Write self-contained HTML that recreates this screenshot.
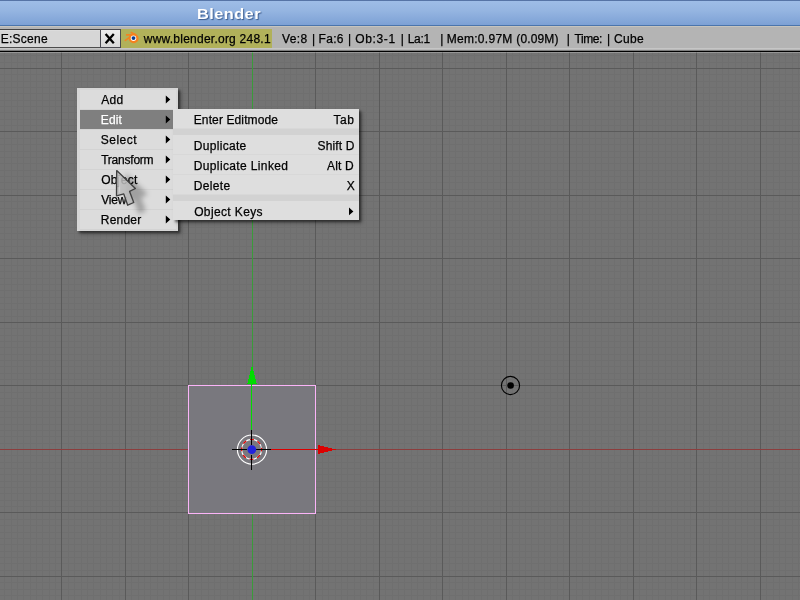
<!DOCTYPE html>
<html><head><meta charset="utf-8"><title>Blender</title>
<style>
html,body{margin:0;padding:0;}
body{width:800px;height:600px;overflow:hidden;background:#737373;position:relative;font-family:"Liberation Sans",sans-serif;font-size:12px;color:#000;}
#title{position:absolute;left:0;top:0;width:800px;height:26px;background:linear-gradient(#9ebde7 0%,#95b5e1 40%,#7da1d5 100%);border-top:1px solid #5674a6;border-bottom:1px solid #4b75ac;box-sizing:border-box;}
#hdr{position:absolute;left:0;top:26px;width:800px;height:26px;background:linear-gradient(#b4b4b4 0px,#b4b4b4 21px,#c6c6c6 21px,#c6c6c6 22px,#b8b8b8 22px,#b8b8b8 23px,#7c7c7c 23px,#7c7c7c 24px,#000 24px,#000 25px);box-sizing:border-box;border-top:1px solid #c6c4be;}
#fld{position:absolute;left:-3px;top:2px;width:104px;height:19px;background:#d6d6d6;border:1px solid #5a5a5a;border-top-color:#464646;border-bottom-color:#4c4c4c;box-shadow:inset 0 1px 0 #dcdcdc;box-sizing:border-box;}
#xb{position:absolute;left:100px;top:2px;width:21px;height:19px;background:linear-gradient(#ededed,#d8d8d8);border:1px solid #4a4a52;box-sizing:border-box;}
#url{position:absolute;left:121px;top:2px;width:151px;height:19px;background:#b1b15a;}
svg{position:absolute;left:0;top:0;}
.t{position:absolute;font-size:12px;line-height:15px;white-space:pre;-webkit-text-stroke:0.25px currentColor;}
.t.big{font-size:15px;line-height:17px;font-weight:bold;color:#fff;text-shadow:1px 1px 1px #3a5a8c;-webkit-text-stroke:0;transform:scaleX(1.09);transform-origin:0 0;}
.menu{position:absolute;background:#d6d6d6;box-shadow:2px 2px 2px rgba(0,0,0,0.42),3px 3px 4px rgba(0,0,0,0.3);}
#m1{left:77px;top:88px;width:101px;height:143px;}
#m2{left:173px;top:109px;width:186px;height:111px;background:#d2d2d2;overflow:hidden;}
.r{position:absolute;left:3px;right:2px;height:19px;background:#dcdcdc;border-bottom:1px solid #d3d3d3;}
#m2 .r{left:0;right:0;background:#dedede;border-bottom-color:#d8d8d8;}
.r.hl{background:#7f7f7f;border-bottom-color:#d4d4d4;}
#ov,#ov2{position:absolute;left:0;top:0;width:800px;height:600px;will-change:transform;}
</style></head><body>
<svg width="800" height="600" viewBox="0 0 800 600" shape-rendering="crispEdges">
<rect x="0" y="52" width="800" height="548" fill="#737373"/>
<path d="M4.5 52V600M11.5 52V600M17.5 52V600M23.5 52V600M30.5 52V600M36.5 52V600M42.5 52V600M49.5 52V600M55.5 52V600M68.5 52V600M74.5 52V600M81.5 52V600M87.5 52V600M93.5 52V600M100.5 52V600M106.5 52V600M112.5 52V600M119.5 52V600M131.5 52V600M138.5 52V600M144.5 52V600M150.5 52V600M157.5 52V600M163.5 52V600M169.5 52V600M176.5 52V600M182.5 52V600M195.5 52V600M201.5 52V600M208.5 52V600M214.5 52V600M220.5 52V600M227.5 52V600M233.5 52V600M239.5 52V600M246.5 52V600M258.5 52V600M265.5 52V600M271.5 52V600M277.5 52V600M284.5 52V600M290.5 52V600M296.5 52V600M303.5 52V600M309.5 52V600M322.5 52V600M328.5 52V600M335.5 52V600M341.5 52V600M347.5 52V600M354.5 52V600M360.5 52V600M366.5 52V600M373.5 52V600M385.5 52V600M392.5 52V600M398.5 52V600M404.5 52V600M411.5 52V600M417.5 52V600M423.5 52V600M430.5 52V600M436.5 52V600M449.5 52V600M455.5 52V600M462.5 52V600M468.5 52V600M474.5 52V600M481.5 52V600M487.5 52V600M493.5 52V600M500.5 52V600M512.5 52V600M519.5 52V600M525.5 52V600M531.5 52V600M538.5 52V600M544.5 52V600M550.5 52V600M557.5 52V600M563.5 52V600M576.5 52V600M582.5 52V600M589.5 52V600M595.5 52V600M601.5 52V600M608.5 52V600M614.5 52V600M620.5 52V600M627.5 52V600M639.5 52V600M646.5 52V600M652.5 52V600M658.5 52V600M665.5 52V600M671.5 52V600M677.5 52V600M684.5 52V600M690.5 52V600M703.5 52V600M709.5 52V600M716.5 52V600M722.5 52V600M728.5 52V600M735.5 52V600M741.5 52V600M747.5 52V600M754.5 52V600M766.5 52V600M773.5 52V600M779.5 52V600M785.5 52V600M792.5 52V600M798.5 52V600M0 55.5H800M0 62.5H800M0 74.5H800M0 81.5H800M0 87.5H800M0 93.5H800M0 100.5H800M0 106.5H800M0 112.5H800M0 119.5H800M0 125.5H800M0 138.5H800M0 144.5H800M0 151.5H800M0 157.5H800M0 163.5H800M0 170.5H800M0 176.5H800M0 182.5H800M0 189.5H800M0 201.5H800M0 208.5H800M0 214.5H800M0 220.5H800M0 227.5H800M0 233.5H800M0 239.5H800M0 246.5H800M0 252.5H800M0 265.5H800M0 271.5H800M0 278.5H800M0 284.5H800M0 290.5H800M0 297.5H800M0 303.5H800M0 309.5H800M0 316.5H800M0 328.5H800M0 335.5H800M0 341.5H800M0 347.5H800M0 354.5H800M0 360.5H800M0 366.5H800M0 373.5H800M0 379.5H800M0 392.5H800M0 398.5H800M0 405.5H800M0 411.5H800M0 417.5H800M0 424.5H800M0 430.5H800M0 436.5H800M0 443.5H800M0 455.5H800M0 462.5H800M0 468.5H800M0 474.5H800M0 481.5H800M0 487.5H800M0 493.5H800M0 500.5H800M0 506.5H800M0 519.5H800M0 525.5H800M0 532.5H800M0 538.5H800M0 544.5H800M0 551.5H800M0 557.5H800M0 563.5H800M0 570.5H800M0 582.5H800M0 589.5H800M0 595.5H800" stroke="#6f6f6f" fill="none"/>
<path d="M61.5 52V600M125.5 52V600M188.5 52V600M315.5 52V600M379.5 52V600M442.5 52V600M506.5 52V600M569.5 52V600M633.5 52V600M696.5 52V600M760.5 52V600M0 68.5H800M0 131.5H800M0 195.5H800M0 258.5H800M0 322.5H800M0 385.5H800M0 512.5H800M0 576.5H800" stroke="#5a5a5a" fill="none"/>
<path d="M0 449.5H800" stroke="#8c3d3d" stroke-width="1"/>
<path d="M252.5 52V600" stroke="#3a9b3a" stroke-width="1"/>
<path d="M0 52.5H800" stroke="rgba(255,255,255,0.25)" stroke-width="1"/>
<rect x="188.5" y="385.5" width="127" height="128" fill="#79787e" stroke="#fbb4f8" stroke-width="1"/>
<!-- manipulator -->
<g fill="#00dc00">
<rect x="251" y="384" width="1" height="46"/>
<rect x="251" y="367" width="2" height="4"/><rect x="250" y="371" width="4" height="4"/><rect x="249" y="375" width="6" height="4"/><rect x="248" y="379" width="8" height="4"/><rect x="247" y="383" width="10" height="1"/>
</g>
<g fill="#dc0000">
<rect x="271" y="449" width="47" height="1"/>
<rect x="318" y="445" width="2" height="9"/><rect x="320" y="446" width="4" height="7"/><rect x="324" y="447" width="4" height="5"/><rect x="328" y="448" width="4" height="3"/><rect x="332" y="449" width="4" height="1"/>
</g>
</svg>
<svg width="800" height="600" viewBox="0 0 800 600">
<circle cx="252" cy="449.6" r="14.6" fill="none" stroke="#fff" stroke-width="1.1"/>
<circle cx="251.6" cy="449.4" r="10" fill="none" stroke="#fff" stroke-width="1.1"/>
<circle cx="251.6" cy="449.4" r="10" fill="none" stroke="#e80000" stroke-width="1.2" stroke-dasharray="3.93 3.93" stroke-dashoffset="2"/>
<path d="M251.5 430V445M251.5 455V470M232 449.5H247M256 449.5H271" stroke="#000" stroke-width="1" shape-rendering="crispEdges"/>
<circle cx="251.8" cy="449.6" r="4.4" fill="#2222dd"/>
<circle cx="510.5" cy="385.5" r="9.1" fill="none" stroke="#000" stroke-width="1.1"/>
<circle cx="510.6" cy="385.5" r="3.3" fill="#000"/>
</svg>
<div id="title"></div>
<div id="hdr">
 <div id="fld"></div>
 <div id="xb"></div>
 <div id="url"></div>
</div>
<div id="ov">
<svg width="800" height="600" viewBox="0 0 800 600">
<path d="M105.6 34L113.8 43.2M113.8 34L105.6 43.2" stroke="#000" stroke-width="2.3" fill="none"/>
<g stroke="#f5821f" stroke-width="1.6" stroke-linecap="round" fill="none">
<path d="M126.6 34.9H133.5"/><path d="M131.2 32.5L135.6 34.8"/><path d="M125.3 40.4L130.2 36.9"/>
</g>
<circle cx="133.7" cy="38.4" r="4.9" fill="#f5821f"/>
<circle cx="133.5" cy="38.2" r="2.75" fill="#fff"/>
<circle cx="133.5" cy="38.1" r="1.95" fill="#0b3d91"/>
</svg>
<span class="t big" style="left:196.9px;top:5px;letter-spacing:0.4px;">Blender</span>
<span class="t" style="left:0.8px;top:32px;letter-spacing:0.233px;">E:Scene</span>
<span class="t" style="left:143.75px;top:32px;letter-spacing:0.238px;">www.blender.org 248.1</span>
<span class="t" style="left:282.1px;top:32px;letter-spacing:0.333px;">Ve:8</span>
<span class="t" style="left:312.0px;top:32px;letter-spacing:0px;">|</span>
<span class="t" style="left:318.6px;top:32px;letter-spacing:0.267px;">Fa:6</span>
<span class="t" style="left:348.1px;top:32px;letter-spacing:0px;">|</span>
<span class="t" style="left:355.2px;top:32px;letter-spacing:0.64px;">Ob:3-1</span>
<span class="t" style="left:400.7px;top:32px;letter-spacing:0px;">|</span>
<span class="t" style="left:407.7px;top:32px;letter-spacing:-0.3px;">La:1</span>
<span class="t" style="left:440.2px;top:32px;letter-spacing:0px;">|</span>
<span class="t" style="left:446.7px;top:32px;letter-spacing:0.288px;">Mem:0.97M</span>
<span class="t" style="left:516.3px;top:32px;letter-spacing:0.133px;">(0.09M)</span>
<span class="t" style="left:566.8px;top:32px;letter-spacing:0px;">|</span>
<span class="t" style="left:574.5px;top:32px;letter-spacing:-0.425px;">Time:</span>
<span class="t" style="left:606.9px;top:32px;letter-spacing:0px;">|</span>
<span class="t" style="left:614.0px;top:32px;letter-spacing:0.333px;">Cube</span>
</div>
<div class="menu" id="m1"><div class="r" style="top:2px"></div><div class="r" style="top:42px"></div><div class="r" style="top:62px"></div><div class="r" style="top:82px"></div><div class="r" style="top:102px"></div><div class="r" style="top:122px"></div><div class="r hl" style="top:22px"></div></div>
<div class="menu" id="m2"><div class="r" style="top:0px"></div><div class="r" style="top:26px"></div><div class="r" style="top:46px"></div><div class="r" style="top:66px"></div><div class="r" style="top:92px"></div></div>
<div id="ov2" style="position:absolute;left:0;top:0;width:800px;height:600px;">
<span class="t" style="left:101.2px;top:93px;letter-spacing:0.35px;">Add</span>
<span class="t" style="left:100.8px;top:113px;letter-spacing:0.133px;color:#fff;">Edit</span>
<span class="t" style="left:100.8px;top:133px;letter-spacing:0.48px;">Select</span>
<span class="t" style="left:101.2px;top:153px;letter-spacing:-0.225px;">Transform</span>
<span class="t" style="left:101.2px;top:173px;letter-spacing:0.28px;">Object</span>
<span class="t" style="left:101.3px;top:193px;letter-spacing:-0.25px;">View</span>
<span class="t" style="left:100.8px;top:213px;letter-spacing:0.2px;">Render</span>
<span class="t" style="left:193.75px;top:113px;letter-spacing:0.115px;">Enter Editmode</span>
<span class="t" style="left:193.75px;top:139px;letter-spacing:0.312px;">Duplicate</span>
<span class="t" style="left:193.75px;top:159px;letter-spacing:0.367px;">Duplicate Linked</span>
<span class="t" style="left:193.75px;top:179px;letter-spacing:0.33px;">Delete</span>
<span class="t" style="left:194.15px;top:205px;letter-spacing:0.375px;">Object Keys</span>
<span class="t" style="left:333.4px;top:113px;letter-spacing:0.65px;">Tab</span>
<span class="t" style="left:317.5px;top:139px;letter-spacing:0.133px;">Shift D</span>
<span class="t" style="left:327.0px;top:159px;letter-spacing:0.175px;">Alt D</span>
<span class="t" style="left:346.8px;top:179px;letter-spacing:0px;">X</span>
<svg width="800" height="600" viewBox="0 0 800 600">
<path d="M165.8 95.5L170.3 99.5L165.8 103.5ZM165.8 115.5L170.3 119.5L165.8 123.5ZM165.8 135.5L170.3 139.5L165.8 143.5ZM165.8 155.5L170.3 159.5L165.8 163.5ZM165.8 175.5L170.3 179.5L165.8 183.5ZM165.8 195.5L170.3 199.5L165.8 203.5ZM165.8 215.5L170.3 219.5L165.8 223.5ZM349 207.5L353.4 211.4L349 215.3Z" fill="#000"/>
<defs><filter id="bl" x="-50%" y="-50%" width="200%" height="200%"><feGaussianBlur stdDeviation="2.2"/></filter></defs>
<path d="M116.7 170.6L116.5 195.8L123.75 193.9L127.7 205.2L133.75 202.5L129.6 191.4L135.4 188.5Z" transform="translate(135.5,196) scale(1.18) translate(-125,-190)" fill="rgba(0,0,0,0.27)" filter="url(#bl)"/>
<path d="M116.7 170.6L116.5 195.8L123.75 193.9L127.7 205.2L133.75 202.5L129.6 191.4L135.4 188.5Z" fill="rgba(188,188,188,0.86)" stroke="#404040" stroke-width="1.35" stroke-linejoin="round"/>
<path d="M119.6 176.5V192.5" stroke="rgba(225,225,225,0.7)" stroke-width="0.8"/>
</svg>
</div>
</body></html>
